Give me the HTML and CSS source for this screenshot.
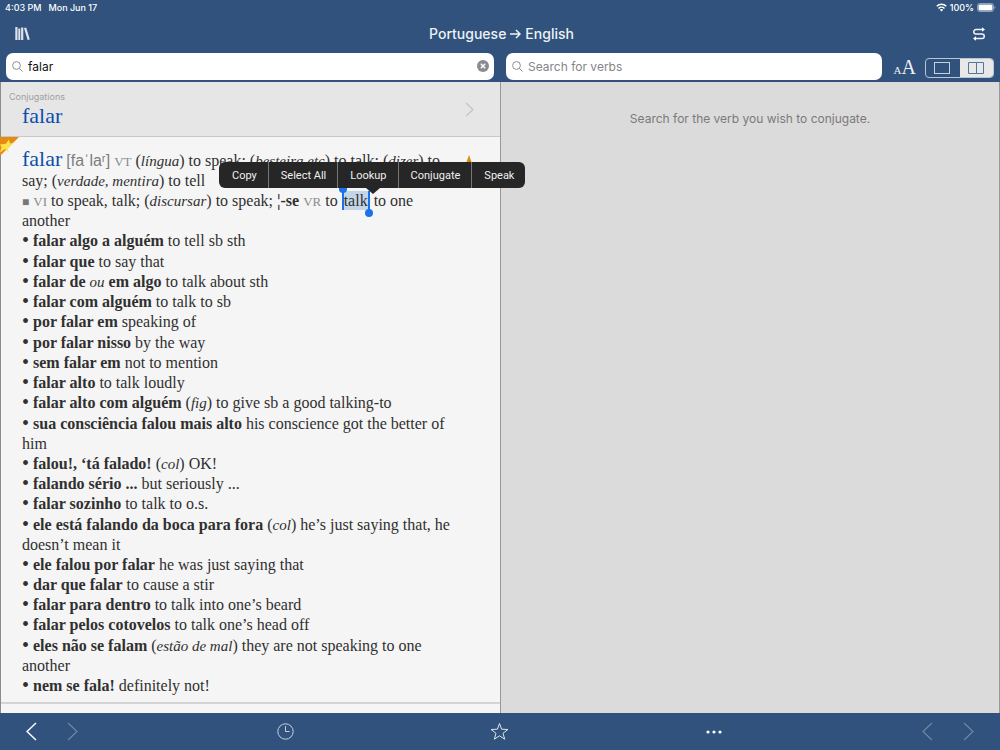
FILE: index.html
```html
<!DOCTYPE html>
<html lang="en">
<head>
<meta charset="utf-8">
<meta name="viewport" content="width=device-width, initial-scale=1">
<title>Portuguese → English</title>
<link rel="stylesheet" href="styles.css">
</head>
<body>
<header class="top">
  <div class="status">
    <span>4:03 PM</span><span>Mon Jun 17</span>
    <span class="status-right">
      <svg width="11" height="9" viewBox="0 0 22 18" fill="none" stroke="#fff" stroke-width="3"><path d="M1.5 6.5a13.500 13.500 0 0 1 19 0M5 11a8.500 8.500 0 0 1 12 0"/><path d="M11 17l-3.500-3.500a5 5 0 0 1 7 0z" fill="#fff" stroke="none"/></svg>
      <span>100%</span>
      <svg width="19" height="9" viewBox="0 0 19 9"><rect x=".5" y=".5" width="16" height="8" rx="2" fill="none" stroke="#8fa3bf"/><rect x="1.500" y="1.500" width="14" height="6" rx="1" fill="#fff"/><path d="M17.500 3v3q1-.5 1-1.500t-1-1.500" fill="#8fa3bf"/></svg>
    </span>
  </div>
  <div class="nav">
    <button class="icon" aria-label="Dictionaries"><svg width="16" height="15" viewBox="0 0 16 15" fill="#dde3ec"><path d="M.3 1h2.200v13H.3zM3.300 2.500h2v11.500h-2zM6.100 1.500h2.200v12.500H6.100zM9 2l2.200-.6 3.600 12-2.200.7z"/></svg></button>
    <h1 class="title">Portuguese <svg width="11" height="10" viewBox="0 0 11 10" fill="none" stroke="#eef1f5" stroke-width="1.500"><path d="M0 5h10M6 1l4 4-4 4"/></svg> English</h1>
    <button class="icon" aria-label="Swap languages"><svg width="14" height="14" viewBox="0 0 14 14" fill="none" stroke="#f2f4f8" stroke-width="1.500"><path d="M11 2.500H4a2.200 2.200 0 0 0 0 4.500h6a2.200 2.200 0 0 1 0 4.500H3"/><path d="M10 .3L13 2.500 10 4.700zM4 9.300L1 11.500 4 13.700z" fill="#fff" stroke="none"/></svg></button>
  </div>
  <div class="searches">
    <div class="search-col">
      <div class="search">
        <svg width="11" height="11" viewBox="0 0 11 11" fill="none" stroke="#8e8e93"><circle cx="4.500" cy="4.500" r="3.900"/><path d="M7.300 7.300l3.300 3.300"/></svg>
        <input type="text" value="falar" aria-label="Search dictionary">
        <button class="clear" aria-label="Clear"><svg width="12" height="12" viewBox="0 0 12 12"><circle cx="6" cy="6" r="6" fill="#8a8a8f"/><path d="M3.800 3.800l4.400 4.400M8.200 3.800L3.800 8.200" stroke="#fff" stroke-width="1.400"/></svg></button>
      </div>
    </div>
    <div class="search-col verbs">
      <div class="search">
        <svg width="11" height="11" viewBox="0 0 11 11" fill="none" stroke="#8e8e93"><circle cx="4.500" cy="4.500" r="3.900"/><path d="M7.300 7.300l3.300 3.300"/></svg>
        <input type="text" placeholder="Search for verbs" aria-label="Search for verbs">
      </div>
      <button class="text-size" aria-label="Text size"><small>A</small>A</button>
      <div class="segmented">
        <button aria-label="Single pane"><svg width="17" height="12" viewBox="0 0 17 12" fill="none" stroke="#c5cfdd"><rect x=".5" y=".5" width="15" height="11"/></svg></button>
        <button class="active" aria-label="Split pane"><svg width="17" height="12" viewBox="0 0 17 12" fill="none" stroke="#56759d"><path d="M.5.5h15v11H.5zM8.500 0v12"/></svg></button>
      </div>
    </div>
  </div>
</header>
<main class="panes">
  <section class="pane dictionary">
    <a class="conjugations" href="#falar">
      <span><span class="caption">Conjugations</span><span class="headword">falar</span></span>
      <svg width="9" height="15" viewBox="0 0 9 15" fill="none" stroke="#c4c4c6" stroke-width="1.200"><path d="M1 1l7 6.500L1 14"/></svg>
    </a>
    <article class="entry" id="falar">
      <svg class="ribbon" width="19" height="19" viewBox="0 0 19 19"><path d="M0 0h19L0 19z" fill="#e58a17"/><path d="M8.800 2.500l1.300 4 4.200-.9L11 8 8 11l.5 4L5 12l-5 3.500L1.500 10 0 7.500l6-.7z" fill="#ffe14a"/></svg>
      <svg class="bookmark" width="10" height="16" viewBox="0 0 10 16"><path d="M5 0l2.500 7H10v9H0V7h2.500z" fill="#e08c0a"/></svg>
      <div class="senses">
        <p class="sense"><span class="headword">falar</span> <span class="phonetic">[faˈlaʳ]</span> <span class="pos">VT</span> (<i>língua</i>) to speak; (<i>besteira etc</i>) to talk; (<i>dizer</i>) to say; (<i>verdade, mentira</i>) to tell</p>
        <p class="sense"><span class="square">■</span> <span class="pos">VI</span> to speak, talk; (<i>discursar</i>) to speak; <b>¦-se</b> <span class="pos">VR</span> to <span class="selected">talk</span> to one another</p>
        <p><span class="dot">•</span> <b>falar algo a alguém</b> to tell sb sth</p>
        <p><span class="dot">•</span> <b>falar que</b> to say that</p>
        <p><span class="dot">•</span> <b>falar de</b> <i>ou</i> <b>em algo</b> to talk about sth</p>
        <p><span class="dot">•</span> <b>falar com alguém</b> to talk to sb</p>
        <p><span class="dot">•</span> <b>por falar em</b> speaking of</p>
        <p><span class="dot">•</span> <b>por falar nisso</b> by the way</p>
        <p><span class="dot">•</span> <b>sem falar em</b> not to mention</p>
        <p><span class="dot">•</span> <b>falar alto</b> to talk loudly</p>
        <p><span class="dot">•</span> <b>falar alto com alguém</b> (<i>fig</i>) to give sb a good talking-to</p>
        <p><span class="dot">•</span> <b>sua consciência falou mais alto</b> his conscience got the better of him</p>
        <p><span class="dot">•</span> <b>falou!, ‘tá falado!</b> (<i>col</i>) OK!</p>
        <p><span class="dot">•</span> <b>falando sério ...</b> but seriously ...</p>
        <p><span class="dot">•</span> <b>falar sozinho</b> to talk to o.s.</p>
        <p><span class="dot">•</span> <b>ele está falando da boca para fora</b> (<i>col</i>) he’s just saying that, he doesn’t mean it</p>
        <p><span class="dot">•</span> <b>ele falou por falar</b> he was just saying that</p>
        <p><span class="dot">•</span> <b>dar que falar</b> to cause a stir</p>
        <p><span class="dot">•</span> <b>falar para dentro</b> to talk into one’s beard</p>
        <p><span class="dot">•</span> <b>falar pelos cotovelos</b> to talk one’s head off</p>
        <p><span class="dot">•</span> <b>eles não se falam</b> (<i>estão de mal</i>) they are not speaking to one another</p>
        <p><span class="dot">•</span> <b>nem se fala!</b> definitely not!</p>
      </div>
    </article>
    <div class="menu" role="toolbar" aria-label="Selection">
      <button>Copy</button><button>Select All</button><button>Lookup</button><button>Conjugate</button><button>Speak</button>
    </div>
  </section>
  <section class="pane verb-pane"><p>Search for the verb you wish to conjugate.</p></section>
</main>
<footer class="bottom">
  <div class="pair">
    <button class="icon" aria-label="Back"><svg width="11" height="19" viewBox="0 0 11 19" fill="none" stroke="#fff" stroke-width="1.500"><path d="M10 1L1 9.500 10 18"/></svg></button>
    <button class="icon dim" aria-label="Forward"><svg width="11" height="19" viewBox="0 0 11 19" fill="none" stroke="#fff" stroke-width="1.200"><path d="M1 1l9 8.500L1 18"/></svg></button>
  </div>
  <button class="icon" aria-label="History"><svg width="17" height="17" viewBox="0 0 17 17" fill="none" stroke="#c8d2df"><circle cx="8.500" cy="8.500" r="7.700"/><path d="M8.500 3v5.500h4"/></svg></button>
  <button class="icon" aria-label="Favourites"><svg width="19" height="19" viewBox="0 0 19 19" fill="none" stroke="#dde4ec"><path d="M9.500 1.500l2.100 5.700 6.300.3-4.900 3.800 1.700 5.900-5.200-3.400-5.200 3.400L6 11.300 1.100 7.500l6.300-.3z"/></svg></button>
  <button class="icon" aria-label="More"><svg width="16" height="4" viewBox="0 0 16 4" fill="#fff"><circle cx="2" cy="2" r="1.600"/><circle cx="8" cy="2" r="1.600"/><circle cx="14" cy="2" r="1.600"/></svg></button>
  <div class="pair end">
    <button class="icon dim" aria-label="Previous verb"><svg width="11" height="19" viewBox="0 0 11 19" fill="none" stroke="#fff" stroke-width="1.200"><path d="M10 1L1 9.500 10 18"/></svg></button>
    <button class="icon dim" aria-label="Next verb"><svg width="11" height="19" viewBox="0 0 11 19" fill="none" stroke="#fff" stroke-width="1.200"><path d="M1 1l9 8.500L1 18"/></svg></button>
  </div>
</footer>
</body>
</html>
```
FILE: styles.css
```css
* { box-sizing: border-box; }
body { margin: 0; min-height: 100vh; display: flex; flex-direction: column; background: #30527d; font-family: Inter, sans-serif; }
button { font: inherit; color: inherit; background: none; border: 0; padding: 0; margin: 0; }
p, h1 { margin: 0; }
svg { display: block; flex: none; }

.top { color: #fff; padding-bottom: 3px; }
.status { display: flex; gap: 7px; height: 15px; align-items: center; padding: 0 4px 0 5px; font-size: 9px; font-weight: 500; }
.status-right { margin-left: auto; display: flex; align-items: center; gap: 3px; }
.nav { display: flex; justify-content: space-between; align-items: center; height: 37px; padding: 0 14px 0 15px; }
.title { display: flex; align-items: center; gap: 4px; font-size: 14px; font-weight: 500; color: #eef1f5; }
.searches { display: grid; grid-template-columns: 1fr 1fr; height: 27px; }
.search-col { display: flex; align-items: center; padding: 0 6px; }
.search { flex: 1; display: flex; align-items: center; gap: 5px; height: 27px; padding: 0 5px 0 6px; background: #fff; border-radius: 7px; }
.search input { flex: 1; min-width: 0; border: 0; padding: 0; outline: 0; background: none; color: #111; font: 12px Inter, sans-serif; }
.search input::placeholder { color: #85858a; opacity: 1; }
.text-size { margin: 5px 9px 0 12px; font: 20px/20px "Liberation Serif", serif; color: #eef1f5; }
.text-size small { font-size: 11px; }
.segmented { display: flex; width: 69px; height: 20px; margin-top: 4px; border: 1px solid #b9c5d5; border-radius: 4px; overflow: hidden; }
.segmented button { flex: 1; display: flex; align-items: center; justify-content: center; }
.segmented .active { background: #e8e8e8; }

.panes { flex: 1; display: grid; grid-template-columns: 1fr 1fr; }
.pane { min-width: 0; }
.dictionary { position: relative; display: flex; flex-direction: column; background: #f5f5f5; border-left: 1px solid #8c8c8c; padding-bottom: 9px; }
.conjugations { display: flex; justify-content: space-between; align-items: center; min-height: 55px; padding: 0 26px 0 8px; background: #e6e6e6; border-bottom: 1px solid #c9c9c9; text-decoration: none; }
.caption { display: block; color: #a0a0a0; font-size: 9px; line-height: 14px; }
.conjugations .headword { display: block; padding-left: 13px; line-height: 24px; }
.headword { color: #0d4eac; font: 22px/20px "Liberation Serif", serif; }
.entry { position: relative; flex: 1; display: flex; padding: 12px 42px 6px 21px; border-bottom: 2px solid #d4d4d4; }
.ribbon { position: absolute; left: -1px; top: 0; }
.bookmark { position: absolute; right: 26px; top: 18px; }
.senses { flex: 1; display: flex; flex-direction: column; justify-content: space-between; color: #303030; font: 16px/20px "Liberation Serif", serif; }
.senses i { font-size: 15px; line-height: 1; }
.dot { font-size: 20px; line-height: 0; vertical-align: -1px; }
.phonetic { color: #7d7d7d; font: 16px/1 "Liberation Sans", sans-serif; }
.pos { color: #8a8a8a; font-size: 13px; line-height: 1; }
.square { color: #777; font-size: 12px; line-height: 1; }
.selected { position: relative; padding: 1px 0; background: #c4d5e7; border: solid #1a73e8; border-width: 0 2px; }
.selected::before, .selected::after { content: ""; position: absolute; width: 8px; height: 8px; border-radius: 50%; background: #1a73e8; }
.selected::before { left: -5px; top: -6px; }
.selected::after { right: -5px; bottom: -7px; }

.menu { position: absolute; left: 218px; top: 80px; display: flex; height: 26px; background: #262626; border-radius: 6px; color: #f0f0f0; font: 11px Roboto, sans-serif; white-space: nowrap; z-index: 2; }
.menu button { padding: 0 11px 0 12px; border-right: 1px solid #777; }
.menu button:first-child { padding-left: 13px; }
.menu button:last-child { border: 0; }
.menu::after { content: ""; position: absolute; left: 147px; top: 26px; border: solid transparent; border-width: 6px 7px 0; border-top-color: #262626; }
.verb-pane { background: #dbdbdb; border-left: 1px solid #999; border-right: 1px solid #999; padding-top: 28px; text-align: center; color: #7a7a7a; font-size: 12px; line-height: 18px; }

.bottom { display: grid; grid-template-columns: 5fr 6fr 6fr 6fr 5fr; align-items: center; height: 37px; }
.bottom > .icon { justify-self: center; }
.pair { display: flex; gap: 30px; padding: 0 26px; }
.pair.end { justify-content: flex-end; }
.dim { opacity: .3; }
```
